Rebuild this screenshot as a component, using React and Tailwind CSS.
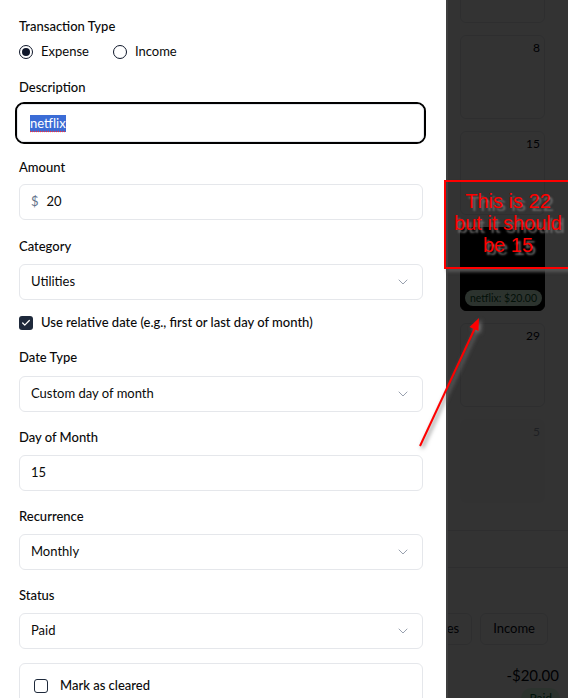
import { ChevronDown, Check } from 'lucide-react';

function Label({ children, className = '' }) {
  return (
    <div className={`h-5 shrink-0 text-[13px] leading-5 font-medium text-[#0a0a0a] ${className}`}>
      {children}
    </div>
  );
}

function Select({ value, className = '' }) {
  return (
    <div className={`h-9 shrink-0 flex items-center justify-between rounded-md border border-[#e5e7eb] pl-[11px] pr-[11px] text-[13px] text-[#0a0a0a] ${className}`}>
      <span>{value}</span>
      <ChevronDown size={16} strokeWidth={1.5} className="text-gray-400" />
    </div>
  );
}

function Radio({ checked, label }) {
  return (
    <div className="flex items-center gap-2">
      <div className="w-[14px] h-[14px] rounded-full border border-[#0f172a] flex items-center justify-center">
        {checked && <div className="w-[8px] h-[8px] rounded-full bg-[#0f172a]" />}
      </div>
      <span className="text-[13px] text-[#0a0a0a]">{label}</span>
    </div>
  );
}

function DayCell({ day, children, dark, muted }) {
  return (
    <div
      className={`w-[85px] h-[84px] shrink-0 rounded-md border p-1 flex flex-col justify-between text-xs text-right
        ${dark ? 'bg-black border-black' : muted ? 'bg-gray-50 border-transparent text-gray-400' : 'bg-white border-gray-200 text-gray-950'}`}
    >
      <span>{dark ? '' : day}</span>
      {children}
    </div>
  );
}

export default function App() {
  return (
    <div className="relative w-[568px] h-[698px] overflow-hidden flex font-['Lato',sans-serif] bg-white">
      {/* sheet */}
      <div className="w-[446px] shrink-0 h-full bg-white pl-[19px] pr-[23px] pt-[16px] flex flex-col z-10 shadow-[2px_0_0_#3e3e3e]">
        <Label>Transaction Type</Label>
        <div className="mt-[6px] h-5 shrink-0 flex items-center gap-[24px]">
          <Radio checked label="Expense" />
          <Radio label="Income" />
        </div>

        <Label className="mt-[15px]">Description</Label>
        <div className="mt-[5px] ml-[-4px] mr-[-3px] h-[42px] shrink-0 rounded-[9px] border-2 border-black">
          <div className="h-full rounded-[7px] border border-[#e5e7eb] pl-3 flex items-center text-[13px]">
            <span className="bg-[#3b6cd6] text-white leading-[17px] underline decoration-dotted decoration-red-500 underline-offset-[3px]">netflix</span>
          </div>
        </div>

        <Label className="mt-[13px]">Amount</Label>
        <div className="mt-[7px] h-9 shrink-0 flex items-center rounded-md border border-[#e5e7eb] px-[11px] text-[13px]">
          <span className="text-[#64748b]">$</span>
          <span className="ml-[8px] text-[#0a0a0a]">20</span>
        </div>

        <Label className="mt-4">Category</Label>
        <Select className="mt-2" value="Utilities" />

        <div className="mt-[13px] h-5 shrink-0 flex items-center gap-2">
          <div className="w-[14px] h-[14px] rounded-[3px] bg-[#1e293b] flex items-center justify-center">
            <Check size={10} strokeWidth={3} className="text-white" />
          </div>
          <span className="text-[13px] font-medium text-[#0a0a0a]">Use relative date (e.g., first or last day of month)</span>
        </div>

        <Label className="mt-[14px]">Date Type</Label>
        <Select className="mt-[9px]" value="Custom day of month" />

        <Label className="mt-[15px]">Day of Month</Label>
        <div className="mt-2 h-9 shrink-0 flex items-center rounded-md border border-[#e5e7eb] px-[11px] text-[13px] text-[#0a0a0a]">15</div>

        <Label className="mt-[15px]">Recurrence</Label>
        <Select className="mt-2" value="Monthly" />

        <Label className="mt-[15px]">Status</Label>
        <Select className="mt-2" value="Paid" />

        <div className="mt-[14px] h-[80px] shrink-0 rounded-md border border-[#e5e7eb] pt-3 pl-[14px]">
          <div className="h-5 flex items-center gap-3">
            <div className="w-[14px] h-[14px] rounded-[3px] border border-[#1e293b]" />
            <span className="text-[13px] font-medium text-[#0a0a0a]">Mark as cleared</span>
          </div>
        </div>
      </div>

      {/* page behind the overlay */}
      <div className="relative flex-1 h-full overflow-hidden flex flex-col">
        <div className="h-[531px] shrink-0 overflow-hidden border-b border-gray-200">
          <div className="mt-[-61px] pl-[14px] flex flex-col gap-3">
            <DayCell day="1" />
            <DayCell day="8" />
            <DayCell day="15" />
            <DayCell day="22" dark>
              <div className="self-start h-4 rounded-full bg-green-100 text-green-900 px-[5px] text-[10.5px] leading-4 whitespace-nowrap">
                netflix: $20.00
              </div>
            </DayCell>
            <DayCell day="29" />
            <DayCell day="5" muted />
          </div>
        </div>
        <div className="h-[37px] shrink-0 border-b border-gray-200" />
        <div className="mt-[45px] shrink-0 flex justify-end gap-2 pr-[20px]">
          <div className="h-8 shrink-0 px-3 flex items-center rounded-md border border-gray-200 text-[13px] text-gray-950">Expenses</div>
          <div className="h-8 shrink-0 px-3 flex items-center rounded-md border border-gray-200 text-[13px] text-gray-950">Income</div>
        </div>
        <div className="mt-[18px] shrink-0 pr-[9px] text-right text-[15px] leading-6 text-gray-950">-$20.00</div>
        <div className="mt-px shrink-0 pr-[8px] flex justify-end">
          <span className="rounded-full bg-green-100 text-green-800 px-2 text-xs leading-5">Paid</span>
        </div>
        <div className="absolute inset-0 bg-black/80" />
      </div>

      {/* annotation */}
      <div className="absolute left-[444px] top-[180px] w-[140px] h-[89px] border-2 border-[#ff0000] shadow-[3px_3px_3px_#555] z-20">
        <div className="w-[124px] pt-[8px] text-center font-['Liberation_Sans',Arial,sans-serif] text-[20px] leading-[22px] text-[#ff0000] [text-shadow:3px_3px_2px_#6b6b6b]">
          This is 22
          <br />
          but it should
          <br />
          be 15
        </div>
      </div>
      <svg
        className="absolute left-0 top-0 z-20 pointer-events-none drop-shadow-[2px_2px_2px_#777]"
        width="568"
        height="698"
        viewBox="0 0 568 698"
      >
        <line x1="420" y1="446" x2="475" y2="328" stroke="#ff0000" strokeWidth="2" />
        <polygon points="479,318 478.5,331 469.5,327" fill="#ff0000" />
      </svg>
    </div>
  );
}
